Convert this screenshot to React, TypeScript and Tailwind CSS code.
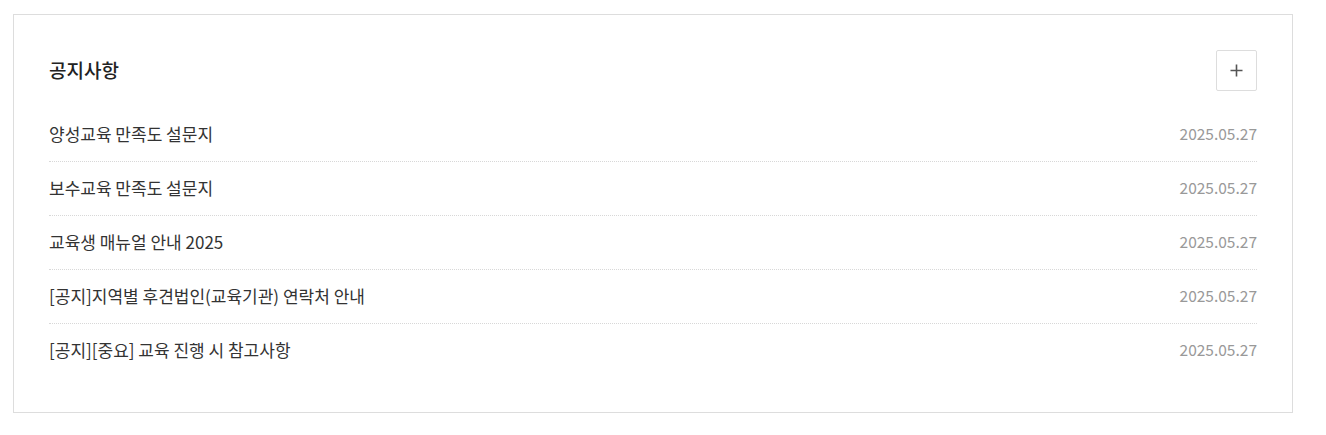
import React from "react";

const NOTICES = [
  { title: "양성교육 만족도 설문지", date: "2025.05.27" },
  { title: "보수교육 만족도 설문지", date: "2025.05.27" },
  { title: "교육생 매뉴얼 안내 2025", date: "2025.05.27" },
  { title: "[공지]지역별 후견법인(교육기관) 연락처 안내", date: "2025.05.27" },
  { title: "[공지][중요] 교육 진행 시 참고사항", date: "2025.05.27" },
];

export default function App() {
  return (
    <div
      className="min-h-screen bg-white pl-[13px] pt-[14px]"
      style={{ fontFamily: '"Noto Sans CJK KR", "Noto Sans", sans-serif' }}
    >
      <section className="w-[1280px] border border-[#dddddd] bg-white px-[35px] pt-[35px] pb-[34px]">
        <div className="flex items-center justify-between">
          <h2 className="-mt-[2px] text-[19px] font-medium text-[#222] leading-none">공지사항</h2>
          <button className="flex h-[41px] w-[41px] items-center justify-center rounded-[2px] border border-[#dddddd] bg-white">
            <svg width="13" height="13" viewBox="0 0 13 13" fill="none">
              <path d="M6.5 0.5v12M0.5 6.5h12" stroke="#555" strokeWidth="1.6" />
            </svg>
          </button>
        </div>

        <ul className="mt-[17px]">
          {NOTICES.map((n, i) => (
            <li
              key={i}
              className={`flex h-[54px] items-center justify-between pb-[2px] ${
                i < NOTICES.length - 1 ? "border-b border-dotted border-[#d8d8d8]" : ""
              }`}
            >
              <span className="text-[17px] text-[#333]">{n.title}</span>
              <span className="text-[15.5px] text-[#999]">{n.date}</span>
            </li>
          ))}
        </ul>
      </section>
    </div>
  );
}
